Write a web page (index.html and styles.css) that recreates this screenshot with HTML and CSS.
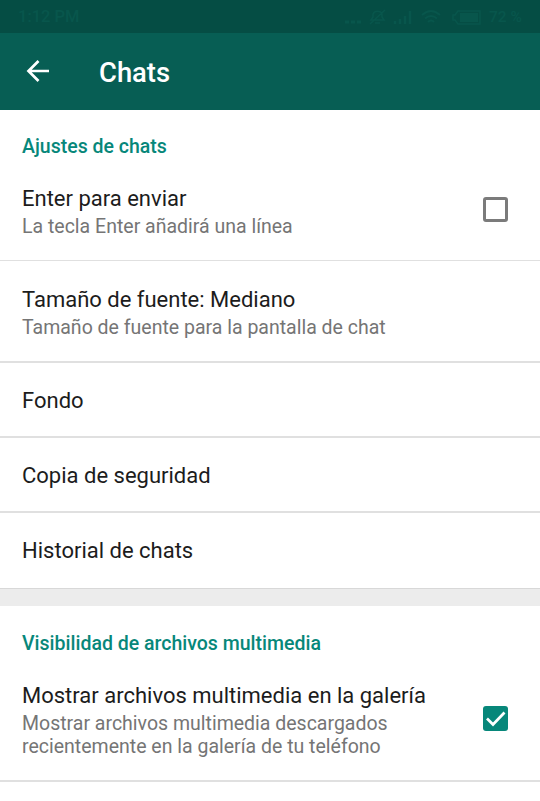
FILE: index.html
```html
<!DOCTYPE html>
<html lang="es">
<head>
<meta charset="utf-8">
<title>Chats</title>
<link rel="stylesheet" href="styles.css">
</head>
<body>
<div class="status">
  <span class="time">1:12 PM</span>
  <svg class="status-icons" width="146" height="20" viewBox="0 0 146 20" fill="none" stroke="currentColor" stroke-width="1.6">
    <path d="M2 15h4M8 15h4M14 15h4" stroke-width="3"/>
    <path d="M28 13h13l-2-3V7a5 5 0 0 0-9 0v3zM32 16h5M27 17 42 3"/>
    <path d="M52 17v-3M57 17v-5M62 17v-8M67 17V4" stroke-width="2.5"/>
    <path d="M79 8q9-8 18 0M82 11.500q6-5 12 0M85 15q3-3 6 0" stroke-width="2"/>
    <path d="M115 4h22v13h-22l-3-4h-2V8h2z"/>
    <path d="M117 6h18v9h-18z" fill="currentColor" stroke="none"/>
  </svg>
  <span class="percent">72 %</span>
</div>
<header class="bar">
  <svg class="back" width="24" height="24" viewBox="0 0 24 24" fill="none" stroke="currentColor" stroke-width="2.7"><path d="M23 12H3M12.5 2 2.500 12l10 10"/></svg>
  <h1>Chats</h1>
</header>
<main>
  <section>
    <h2>Ajustes de chats</h2>
    <div class="row first">
      <div class="text"><div class="title">Enter para enviar</div><div class="sub">La tecla Enter añadirá una línea</div></div>
      <span class="box"></span>
    </div>
    <div class="row double">
      <div class="text"><div class="title">Tamaño de fuente: Mediano</div><div class="sub">Tamaño de fuente para la pantalla de chat</div></div>
    </div>
    <div class="row single"><div class="title">Fondo</div></div>
    <div class="row single"><div class="title">Copia de seguridad</div></div>
    <div class="row single last"><div class="title">Historial de chats</div></div>
  </section>
  <div class="gap"></div>
  <section class="media">
    <h2>Visibilidad de archivos multimedia</h2>
    <div class="row triple">
      <div class="text"><div class="title">Mostrar archivos multimedia en la galería</div><div class="sub">Mostrar archivos multimedia descargados<br>recientemente en la galería de tu teléfono</div></div>
      <span class="box checked"><svg width="25" height="25" viewBox="0 0 25 25" fill="none" stroke="#fff" stroke-width="2.7"><path d="m4 12.500 6 6L21.500 6.500"/></svg></span>
    </div>
  </section>
</main>
</body>
</html>
```
FILE: styles.css
```css
* { box-sizing: border-box; }
body { margin: 0; height: 801px; overflow: hidden; background: #fff; font-family: Roboto, sans-serif; color: #1c1c1c; }
.status { display: flex; align-items: center; height: 33px; padding: 0 16px 0 18px; background: #054d44; color: #08564c; font-size: 16.5px; font-weight: 500; }
.time { flex: 1; }
.percent { width: 35px; font-size: 15.5px; white-space: nowrap; }
.bar { display: flex; align-items: center; height: 77px; padding: 0 26px; background: #075e54; color: #fff; }
.back { margin: -1px 49px 0 0; }
h1 { margin: 2px 0 0; font-size: 27.4px; line-height: 32px; font-weight: 500; }
h2 { margin: 0; height: 50px; padding: 25px 22px 0; font-size: 19.5px; line-height: 24px; font-weight: 500; color: #07877a; white-space: nowrap; }
.row { display: flex; align-items: center; justify-content: space-between; padding: 0 32px 0 22px; border-bottom: 2px solid #e0e0e0; }
.first { height: 101px; padding-bottom: 1px; border-bottom-width: 1px; }
.double { height: 102px; }
.single { height: 75px; padding-top: 2px; }
.last { height: 76px; padding-top: 0; border-bottom: 1px solid #d8d8d8; }
.text { padding-top: 2px; }
.first .text { padding-top: 4px; }
.title { font-size: 22px; line-height: 28px; white-space: nowrap; }
.sub { margin-top: 2px; font-size: 19.5px; line-height: 23px; color: #757575; white-space: nowrap; }
.gap { height: 17px; background: #ececec; }
.media h2 { height: 51px; padding-top: 26px; }
.triple { height: 125px; }
.box { flex: none; width: 25px; height: 25px; border: 3px solid #7b7b7b; border-radius: 3px; }
.checked { border: 0; background: #07877a; }
.checked svg { display: block; }
```
